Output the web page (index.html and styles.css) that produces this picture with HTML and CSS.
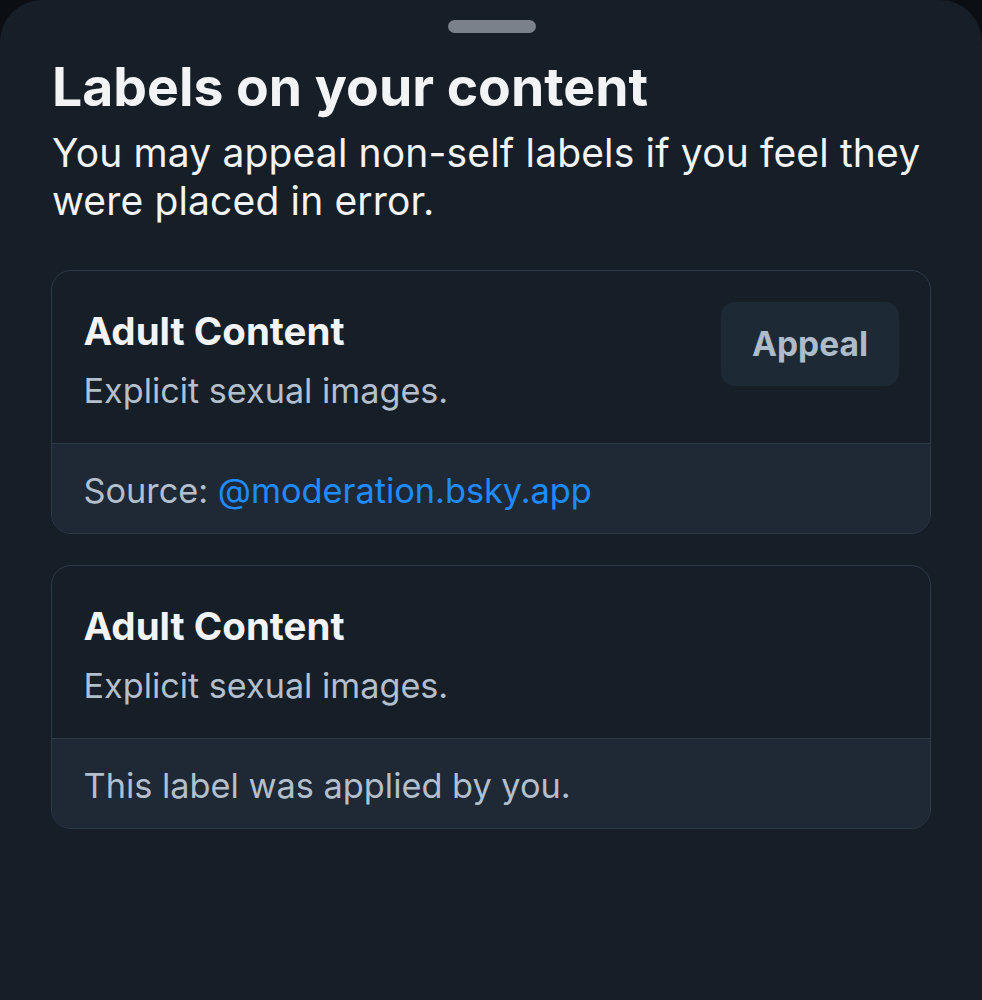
FILE: index.html
```html
<!DOCTYPE html>
<html>
<head>
<meta charset="utf-8">
<link rel="stylesheet" href="styles.css">
</head>
<body>
<div class="sheet">
  <div class="handle"></div>
  <h1 class="title">Labels on your content</h1>
  <p class="subtitle">You may appeal non-self labels if you feel they were placed in error.</p>
  <div class="card">
    <div class="card-main">
      <div class="card-text">
        <div class="label-name">Adult Content</div>
        <div class="label-desc">Explicit sexual images.</div>
      </div>
      <button class="appeal">Appeal</button>
    </div>
    <div class="card-foot">Source: <span class="link">@moderation.bsky.app</span></div>
  </div>
  <div class="card">
    <div class="card-main">
      <div class="card-text">
        <div class="label-name">Adult Content</div>
        <div class="label-desc">Explicit sexual images.</div>
      </div>
    </div>
    <div class="card-foot">This label was applied by you.</div>
  </div>
</div>
</body>
</html>
```
FILE: styles.css
```css
html, body {
  margin: 0;
  padding: 0;
  background: #0b0f14;
  height: 100%;
}
body {
  font-family: Inter, "Noto Sans", sans-serif;
}
.sheet {
  background: #161e27;
  border-radius: 42px 42px 0 0;
  min-height: 1000px;
  box-sizing: border-box;
  padding: 20px 51px 0 52px;
  display: flex;
  flex-direction: column;
}
.handle {
  align-self: center;
  width: 88px;
  height: 13px;
  border-radius: 7px;
  background: #7b818a;
}
.title {
  margin: 22px 0 0 0;
  font-size: 53.5px;
  font-weight: 700;
  line-height: 64px;
  color: #f1f3f5;
}
.subtitle {
  margin: 10px 0 0 0;
  font-size: 39px;
  line-height: 48px;
  letter-spacing: 0.15px;
  color: #f1f3f5;
}
.card {
  margin-top: 45px;
  border: 1.5px solid #2c3a49;
  border-radius: 20px;
  overflow: hidden;
  margin-left: -1px;
}
.card + .card {
  margin-top: 31px;
}
.card-main {
  display: flex;
  justify-content: space-between;
  align-items: flex-start;
  padding: 30.5px 31px 30.5px 31.5px;
}
.label-name {
  font-size: 38.5px;
  font-weight: 700;
  color: #f1f3f5;
  line-height: 46px;
  margin-top: 6px;
}
.label-desc {
  font-size: 34.2px;
  color: #b3bfcc;
  line-height: 44px;
  margin-top: 15px;
}
.appeal {
  font-family: inherit;
  font-size: 33.5px;
  font-weight: 700;
  color: #aebbc9;
  background: #1e2936;
  border: none;
  border-radius: 14px;
  width: 178px;
  height: 84px;
  padding: 0;
}
.card-foot {
  background: #1e2935;
  border-top: 1.5px solid #2c3a49;
  padding: 25px 31.5px 20px 31.5px;
  font-size: 34.3px;
  line-height: 44px;
  color: #b3bfcc;
}
.link {
  color: #208bfe;
}
```
